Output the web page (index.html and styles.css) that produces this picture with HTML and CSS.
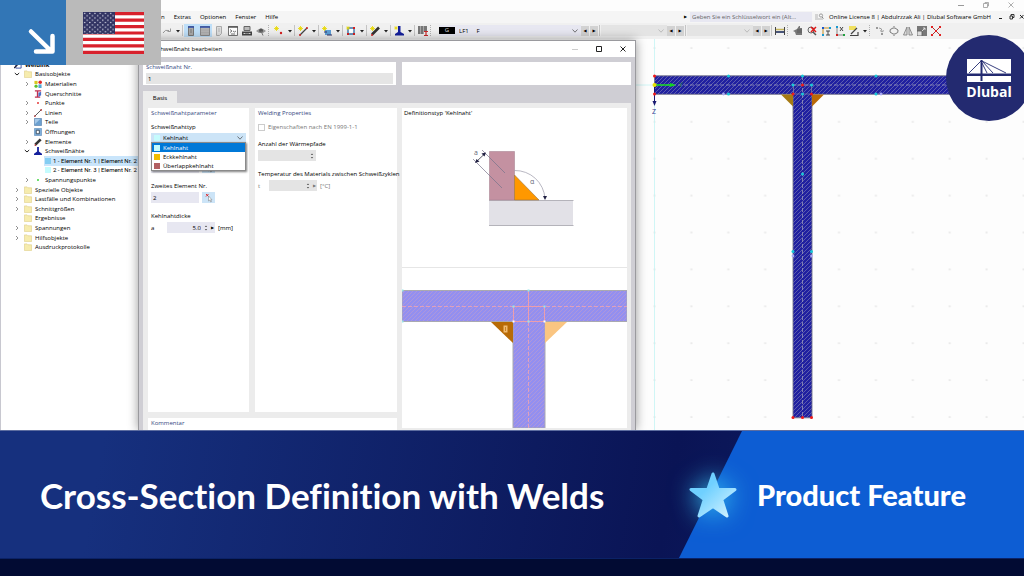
FILE: index.html
```
<!DOCTYPE html>
<html lang="de">
<head>
  <meta charset="UTF-8" />
  <meta name="viewport" content="width=device-width, initial-scale=1.0" />
  <title>Cross-Section Definition with Welds</title>
  <link rel="stylesheet" href="styles.css">
</head>
<body>
  <!-- shared symbols -->
  <svg class="defs" width="0" height="0" aria-hidden="true">
    <symbol id="folder" viewBox="0 0 9 9"><path d="M.5 2V1h3l1 1h4v6.500h-8z" fill="#f6ecae" stroke="#dccb7c" stroke-width=".6"/></symbol>
    <symbol id="chev" viewBox="0 0 6 6"><path d="M2 1l2 2-2 2" fill="none" stroke="#777" stroke-width=".8"/></symbol>
    <symbol id="chev-open" viewBox="0 0 6 6"><path d="M.8 2l2.200 2 2.200-2" fill="none" stroke="#222" stroke-width="1"/></symbol>
    <symbol id="caret" viewBox="0 0 6 6"><path d="M1 2h4l-2 2.400z" fill="#222"/></symbol>
    <symbol id="spark" viewBox="0 0 6 6"><path d="M3 0v6M0 3h6M1 1l4 4M5 1l-4 4" stroke="#e8d800" stroke-width="1"/></symbol>
    <symbol id="spin" viewBox="0 0 4 8"><path d="M.8 3L2 1.500 3.200 3zM.8 5L2 6.500 3.200 5z" fill="#555"/></symbol>
    <symbol id="pick" viewBox="0 0 10 10"><path d="M2 1l2.500 2.500M4.500 1L2 3.500" stroke="#e02020" stroke-width=".9"/><path d="M4.500 3v5l1.200-1 1 2 .8-.4-1-1.800h1.500z" fill="#fff" stroke="#777" stroke-width=".5"/></symbol>
  </svg>

  <main class="app">
    <div class="window-bar">
      <button aria-label="Minimieren"><svg viewBox="0 0 8 8"><path d="M1 4.500h6" stroke="#999"/></svg></button>
      <button aria-label="Verkleinern"><svg viewBox="0 0 8 8"><path d="M1.500 2.500h4v4h-4zM3 2.500v-1h3.500V5h-1" fill="none" stroke="#999" stroke-width=".8"/></svg></button>
      <button aria-label="Schließen"><svg viewBox="0 0 8 8"><path d="M1.500 1.500l5 5m0-5l-5 5" stroke="#999" stroke-width=".8"/></svg></button>
    </div>

    <div class="menu-bar">
      <nav class="menu">
        <a href="#">n</a><a href="#">Extras</a><a href="#">Optionen</a><a href="#">Fenster</a><a href="#">Hilfe</a>
      </nav>
      <div class="menu-right">
        <span class="play">▶</span>
        <input class="search" type="text" aria-label="Suche" placeholder="Geben Sie ein Schlüsselwort ein (Alt...">
        <svg class="find" viewBox="0 0 9 8"><path d="M0 2h3M0 4h3M0 6h8" stroke="#999" stroke-width=".7"/><circle cx="6" cy="2.500" r="1.600" fill="none" stroke="#888" stroke-width=".8"/><path d="M7 4l1.500 1.500" stroke="#888"/></svg>
        <span class="licence">Online License 8 | Abdulrzzak Ali | Dlubal Software GmbH</span>
        <svg class="mdi" viewBox="0 0 26 8"><path d="M1 5.500h3M22 2l3.500 3.500m0-3.500L22 5.500" stroke="#222"/><path d="M12 3h2.500v3H12zM13 3V1.500h3V4.500h-1.500" fill="none" stroke="#222" stroke-width=".9"/></svg>
      </div>
    </div>

    <div class="toolbar">
      <button class="tool" aria-label="Wiederholen"><svg viewBox="0 0 10 10"><path d="M1 7q2-4 6-2.500M8.500 2.500v3h-3" fill="none" stroke="#999"/></svg></button>
      <svg class="caret"><use href="#caret"/></svg>
      <i class="sep"></i>
      <button class="tool on" aria-label="Navigator"><svg viewBox="0 0 10 10"><path d="M2.500.5h5v9h-5z" fill="#aaa" stroke="#777"/><path d="M2 1h6" stroke="#2b4ba8" stroke-width="1.500"/><path d="M4 4h2M4 6h2" stroke="#555" stroke-width=".6"/></svg></button>
      <button class="tool on" aria-label="Tabellen"><svg viewBox="0 0 10 10"><path d="M.5.5h9v9h-9z" fill="#b4b4b4" stroke="#888"/><path d="M0 1h10" stroke="#2b4ba8" stroke-width="1.500"/><path d="M1 4h8M1 6.500h8" stroke="#a0a0a0" stroke-width=".5"/></svg></button>
      <button class="tool" aria-label="Bericht"><svg viewBox="0 0 10 10"><path d="M2.500.5h5v7l-2 2h-3z" fill="#ddd" stroke="#aaa"/><path d="M4 3h2M4 5h2" stroke="#999" stroke-width=".6"/></svg></button>
      <button class="tool" aria-label="Konsole"><svg viewBox="0 0 10 10"><path d="M.5.5h9v9h-9z" fill="#fff" stroke="#777"/><path d="M0 1h10" stroke="#555" stroke-width="1.500"/><path d="M2 3.500l2 1.500-2 1.500M5 5l1.500 1L8 5M3 8h4" fill="none" stroke="#444" stroke-width=".7"/></svg></button>
      <button class="tool" aria-label="Skript"><svg viewBox="0 0 10 10"><path d="M2 .5h6v4H2z" fill="#bbb" stroke="#666"/><path d="M0 5.500h10v4H0z" fill="#444"/><path d="M1.500 7.500h2m1 0h1m1 0h2" stroke="#fff" stroke-width=".8"/></svg></button>
      <button class="tool" aria-label="Ansicht"><svg viewBox="0 0 10 10"><path d="M0 5q5-5 10 0l-3 2H3z" fill="#999"/><circle cx="5" cy="4.500" r="2" fill="#555"/><path d="M5 5l2 4.500" stroke="#777"/></svg></button>
      <i class="sep dotted"></i>
      <button class="tool" aria-label="Neuer Punkt"><svg viewBox="0 0 10 10"><use href="#spark" width="5" height="5"/><circle cx="7" cy="7" r="1.200" fill="#d42020"/></svg></button>
      <svg class="caret"><use href="#caret"/></svg><i class="sep"></i>
      <button class="tool" aria-label="Neue Linie"><svg viewBox="0 0 10 10"><use href="#spark" width="5" height="5"/><path d="M2 9l7-7" stroke="#444" stroke-width="1.200"/><circle cx="2" cy="9" r="1" fill="#d42020"/><circle cx="9" cy="2" r="1" fill="#d42020"/></svg></button>
      <svg class="caret"><use href="#caret"/></svg><i class="sep"></i>
      <button class="tool" aria-label="Neues Teil"><svg viewBox="0 0 10 10"><path d="M3 4h6v5H3z" fill="#5c9ed6"/><use href="#spark" width="5" height="5"/><path d="M2 6h3M5 9h5" stroke="#336" /></svg></button>
      <svg class="caret"><use href="#caret"/></svg><i class="sep"></i>
      <button class="tool" aria-label="Neue Öffnung"><svg viewBox="0 0 10 10"><path d="M2 2h6v6H2z" fill="#fff" stroke="#3c74a8" stroke-width="1.400"/><g fill="#d42020"><path d="M7 1h2v2H7zM1 7h2v2H1zM7 7h2v2H7z"/></g><use href="#spark" width="4" height="4"/></svg></button>
      <svg class="caret"><use href="#caret"/></svg><i class="sep"></i>
      <button class="tool" aria-label="Neues Element"><svg viewBox="0 0 10 10"><path d="M2 8.500L9 1.500" stroke="#333" stroke-width="2.600"/><use href="#spark" width="5" height="5"/><circle cx="2" cy="9" r="1" fill="#d42020"/></svg></button>
      <svg class="caret"><use href="#caret"/></svg><i class="sep"></i>
      <button class="tool" aria-label="Neue Schweißnaht"><svg viewBox="0 0 10 10"><path d="M4 0h2.500v6L10 8v1.500H1V8l3-2z" fill="#15209c"/><use href="#spark" width="4" height="4"/></svg></button>
      <svg class="caret"><use href="#caret"/></svg><i class="sep"></i>
      <button class="tool" aria-label="Bibliothek"><svg viewBox="0 0 10 10"><path d="M0 0h2.600v8H0zM3 0h2.600v8H3zM6 0h3v5H6z" fill="#777"/><path d="M6 5.500h4M8 5.500v4M6 9.500h4" stroke="#c82828" stroke-width="1.200"/></svg></button>
      <i class="sep dotted"></i>

      <div class="load-case">
        <span class="load-tag">G</span>
        <select aria-label="Lastfall"><option>LF1 &nbsp; &nbsp; F</option></select>
        <svg class="down" viewBox="0 0 6 6"><path d="M.5 1.500L3 4.200l2.500-2.700" fill="none" stroke="#444" stroke-width=".7"/></svg>
      </div>
      <button class="step" aria-label="Zurück">◀</button><button class="step" aria-label="Weiter">▶</button>
      <i class="sep"></i>
      <div class="result"><select aria-label="Ergebnis" disabled></select><svg class="down" viewBox="0 0 6 6"><path d="M.5 1.500L3 4.200l2.500-2.700" fill="none" stroke="#aaa" stroke-width=".7"/></svg></div>
      <button class="step" aria-label="Zurück">◀</button><button class="step" aria-label="Weiter">▶</button>
      <i class="sep"></i>
      <div class="result"><select aria-label="Wert" disabled></select><svg class="down" viewBox="0 0 6 6"><path d="M.5 1.500L3 4.200l2.500-2.700" fill="none" stroke="#aaa" stroke-width=".7"/></svg></div>
      <button class="step" aria-label="Zurück">◀</button><button class="step" aria-label="Weiter">▶</button>
      <i class="sep"></i>
      <button class="tool" aria-label="Bemaßung"><svg viewBox="0 0 10 10"><path d="M.5 1v8M9.500 1v8" stroke="#444"/><path d="M1 3.500h8" stroke="#c8b860" stroke-width="1.500"/><path d="M1 6h8" stroke="#48557a" stroke-width="2"/></svg></button>
      <i class="sep dotted"></i>
      <button class="tool" aria-label="Hand"><svg viewBox="0 0 10 10"><path d="M0 5l4-2 2-3h1v2h2v7H3L2 6z" fill="#777"/><path d="M4 4h5M4 6h5" stroke="#444" stroke-width=".6"/></svg></button>
      <button class="tool" aria-label="Zoom zurücksetzen"><svg viewBox="0 0 10 10"><circle cx="4" cy="4" r="3" fill="#eee" stroke="#666"/><path d="M6 6l3 3" stroke="#555" stroke-width="1.500"/><path d="M4 1l5 5m0-5L4 6" stroke="#e01818" stroke-width="1.500"/></svg></button>
      <button class="tool" aria-label="Ansicht X"><svg viewBox="0 0 10 10"><path d="M2 2v7M2 2h7" stroke="#c89020"/><path d="M1 1h2v2H1z" fill="#1858d0"/><path d="M1 8h2v2H1zM8 1h2v2H8z" fill="#1898d0"/><path d="M5 5h4M5 9h4M7 5v4" stroke="#444"/></svg></button>
      <button class="tool" aria-label="Ansicht Z"><svg viewBox="0 0 10 10"><path d="M2 1v8h7" fill="none" stroke="#888"/><path d="M1 0h2v2H1z" fill="#1898d0"/><path d="M1 8h2v2H1z" fill="#d02020"/><path d="M8 8h2v2H8z" fill="#20a040"/><path d="M5 1l3 4M8 1L5 5" stroke="#444"/></svg></button>
      <button class="tool" aria-label="Arbeitsebene"><svg viewBox="0 0 10 10"><path d="M0 0h7v4H0z" fill="#f0e060"/><path d="M2 8l6-6M1 9.500h8V6" fill="none" stroke="#444" stroke-width="1.200"/></svg></button>
      <svg class="caret"><use href="#caret"/></svg>
      <i class="sep dotted"></i>
      <button class="tool" aria-label="Verschieben"><svg viewBox="0 0 10 10"><path d="M1 1h2v2H1zM6 7h2v2H6z" fill="#999"/><path d="M4 2q3 0 3 3M5 4.500l2 1.500 2-1.500" fill="none" stroke="#888" stroke-width=".8"/></svg></button>
      <button class="tool" aria-label="Drehen"><svg viewBox="0 0 10 10"><path d="M4 2Q0 3 1 6l3 2M6 8q4-1 3-4L6 2M5 0v3M5 7v3" fill="none" stroke="#777"/></svg></button>
      <button class="tool" aria-label="Spiegeln"><svg viewBox="0 0 10 10"><path d="M4 1v8H.5zM6 1v8h3.500z" fill="#ddd" stroke="#777" stroke-width=".8"/></svg></button>
      <button class="tool" aria-label="Skalieren"><svg viewBox="0 0 10 10"><path d="M0 0h10v10H0z" fill="#777"/><path d="M0 5h5v5H0z" fill="#ddd" stroke="#555" stroke-width=".8"/><path d="M5 5l3-3M6 2h2v2" fill="none" stroke="#eee" stroke-width=".8"/></svg></button>
      <button class="tool" aria-label="Löschen"><svg viewBox="0 0 10 10"><path d="M1 1l8 8M9 1L1 9" stroke="#b03030"/><path d="M0 0h2v2H0zM8 0h2v2H8zM0 8h2v2H0zM8 8h2v2H8zM4 4h2v2H4z" fill="#e02020"/></svg></button>
    </div>

    <div class="workspace">
      <aside class="sidebar">
        <ul class="tree">
          <li class="root"><svg class="ico" viewBox="0 0 9 9"><path d="M2 0h6v8H2z" fill="#fff" stroke="#334aa0"/><path d="M0 8l5-5" stroke="#223" stroke-width="1.500"/></svg><b>Weldlnk</b></li>
          <li><svg class="arr"><use href="#chev-open"/></svg><svg class="ico"><use href="#folder"/></svg>Basisobjekte</li>
          <li class="sub"><svg class="arr"><use href="#chev"/></svg><svg class="ico" viewBox="0 0 9 9"><path d="M.5 1h3.500v3.500H.5z" fill="#d8c820"/><circle cx="7" cy="2.500" r="2" fill="#e02828"/><circle cx="2.300" cy="7" r="1.800" fill="#58c030"/><path d="M5 5h3.500v4H5z" fill="#50a8d8"/></svg>Materialien</li>
          <li class="sub"><svg class="arr"></svg><svg class="ico" viewBox="0 0 9 9"><path d="M1 1h7M1 8h6M4 1v7" stroke="#c03050" stroke-width="1.600"/><path d="M5 3l3-1v4L5 8z" fill="#4a70c8"/></svg>Querschnitte</li>
          <li class="sub"><svg class="arr"><use href="#chev"/></svg><svg class="ico" viewBox="0 0 9 9"><circle cx="4.500" cy="4.500" r="1" fill="#e02020"/></svg>Punkte</li>
          <li class="sub"><svg class="arr"><use href="#chev"/></svg><svg class="ico" viewBox="0 0 9 9"><path d="M1 8l7-7" stroke="#444"/><circle cx="1" cy="8" r="1" fill="#b03030"/><circle cx="8" cy="1" r="1" fill="#b03030"/></svg>Linien</li>
          <li class="sub"><svg class="arr"><use href="#chev"/></svg><svg class="ico" viewBox="0 0 9 9"><path d="M.5.5h8v8h-8z" fill="#6ba0d0" stroke="#456f9c" stroke-width=".6"/><path d="M1 1h6L1 7z" fill="#a4c8e8"/></svg>Teile</li>
          <li class="sub"><svg class="arr"></svg><svg class="ico" viewBox="0 0 9 9"><path d="M.5.500h8v8h-8z" fill="#7fb0dc" stroke="#4d7fb0" stroke-width=".6"/><path d="M2.500 2.500h3.500v4H2.500z" fill="#fff" stroke="#345"/></svg>Öffnungen</li>
          <li class="sub"><svg class="arr"><use href="#chev"/></svg><svg class="ico" viewBox="0 0 9 9"><path d="M1.500 7.500l6-6" stroke="#333" stroke-width="3"/><circle cx="1.500" cy="8" r="1" fill="#b03030"/></svg>Elemente</li>
          <li class="sub"><svg class="arr"><use href="#chev-open"/></svg><svg class="ico" viewBox="0 0 9 9"><path d="M3.500 0h2v5L9 7.500V9H0V7.500L3.500 5z" fill="#15209c"/></svg>Schweißnähte</li>
          <li class="leaf active"><i class="sw blue"></i>1 - Element Nr. 1 | Element Nr. 2</li>
          <li class="leaf"><i class="sw cyan"></i>2 - Element Nr. 3 | Element Nr. 2</li>
          <li class="sub"><svg class="arr"><use href="#chev"/></svg><svg class="ico" viewBox="0 0 9 9"><circle cx="4.500" cy="4.500" r="1" fill="#28d028"/></svg>Spannungspunkte</li>
          <li><svg class="arr"><use href="#chev"/></svg><svg class="ico"><use href="#folder"/></svg>Spezielle Objekte</li>
          <li><svg class="arr"><use href="#chev"/></svg><svg class="ico"><use href="#folder"/></svg>Lastfälle und Kombinationen</li>
          <li><svg class="arr"><use href="#chev"/></svg><svg class="ico"><use href="#folder"/></svg>Schnittgrößen</li>
          <li><svg class="arr"></svg><svg class="ico"><use href="#folder"/></svg>Ergebnisse</li>
          <li><svg class="arr"><use href="#chev"/></svg><svg class="ico"><use href="#folder"/></svg>Spannungen</li>
          <li><svg class="arr"><use href="#chev"/></svg><svg class="ico"><use href="#folder"/></svg>Hilfsobjekte</li>
          <li><svg class="arr"></svg><svg class="ico"><use href="#folder"/></svg>Ausdruckprotokolle</li>
        </ul>
      </aside>

      <section class="dialog">
        <header class="dialog-title">
          <h2>Schweißnaht bearbeiten</h2>
          <div class="dialog-buttons">
            <button aria-label="Minimieren"><svg viewBox="0 0 8 8"><path d="M1 4.500h6" stroke="#ccc"/></svg></button>
            <button aria-label="Maximieren"><svg viewBox="0 0 8 8"><path d="M1.500 1.500h5v5h-5z" fill="none" stroke="#222"/></svg></button>
            <button aria-label="Schließen"><svg viewBox="0 0 8 8"><path d="M1.500 1.500l5 5m0-5l-5 5" stroke="#222"/></svg></button>
          </div>
        </header>
        <div class="dialog-head">
          <div class="card number">
            <label class="title" for="weld-no">Schweißnaht Nr.</label>
            <input id="weld-no" type="text" value="1">
          </div>
          <div class="card"></div>
        </div>
        <div class="tabs"><button class="tab">Basis</button></div>
        <div class="panel">
          <div class="forms">
            <div class="card form">
              <h3 class="title">Schweißnahtparameter</h3>
              <label for="weld-type">Schweißnahttyp</label>
              <div class="combo">
                <i class="sw cyan"></i>
                <select id="weld-type"><option>Kehlnaht</option><option>Eckkehlnaht</option><option>Überlappkehlnaht</option></select>
                <svg class="down" viewBox="0 0 6 6"><path d="M.5 1.500L3 4.200l2.500-2.700" fill="none" stroke="#444" stroke-width=".7"/></svg>
                <ul class="options">
                  <li class="selected"><i class="sw cyan"></i>Kehlnaht</li>
                  <li><i class="sw yellow"></i>Eckkehlnaht</li>
                  <li><i class="sw red"></i>Überlappkehlnaht</li>
                </ul>
              </div>
              <div class="row first">
                <input class="element" type="text" aria-label="Erstes Element" value="">
                <button class="pick" aria-label="Auswählen"><svg><use href="#pick"/></svg></button>
              </div>
              <label for="second">Zweites Element Nr.</label>
              <div class="row">
                <input id="second" class="element" type="text" value="2">
                <button class="pick" aria-label="Auswählen"><svg><use href="#pick"/></svg></button>
              </div>
              <label for="thick">Kehlnahtdicke</label>
              <div class="row">
                <span class="var">a</span>
                <span class="stepper"><input id="thick" type="text" value="5.0"><svg class="spin"><use href="#spin"/></svg><span class="play">▶</span></span>
                <span>[mm]</span>
              </div>
            </div>
            <div class="card form off">
              <h3 class="title">Welding Properties</h3>
              <div class="check"><input id="en" type="checkbox" disabled><label for="en">Eigenschaften nach EN 1999-1-1</label></div>
              <label for="paths">Anzahl der Wärmepfade</label>
              <div class="row"><span class="stepper wide"><input id="paths" type="text" disabled><svg class="spin"><use href="#spin"/></svg></span></div>
              <label for="temp">Temperatur des Materials zwischen Schweißzyklen</label>
              <div class="row"><span class="var">t</span><span class="stepper"><input id="temp" type="text" disabled><svg class="spin"><use href="#spin"/></svg><span class="play">▶</span></span><span class="unit">[°C]</span></div>
            </div>
            <div class="card comment"><h3 class="title">Kommentar</h3></div>
          </div>

          <div class="card preview">
            <h3>Definitionstyp 'Kehlnaht'</h3>
            <svg class="sketch" viewBox="402 118 225 149">
              <path d="M489 200h84v25h-84z" fill="#e2e1e7"/>
              <path d="M489 200.500h84.500M489 225.500h84.500" stroke="#b4b3ba"/>
              <path d="M489.500 151.500h25v48.500h-25z" fill="#c491a1" stroke="#a98593" stroke-width=".6"/>
              <path d="M514.500 175v25h24.500z" fill="#ff9800" stroke="#9a7340" stroke-width=".6"/>
              <path d="M482 150l23 23M473 159l29 29" stroke="#77728a" stroke-width=".7"/>
              <path d="M476.500 161.500l8-7.500" stroke="#334" stroke-width=".8"/>
              <path d="M475 163l1.500-4 3 2.500zM486 152.500l-4.500 1 3 3z" fill="#224"/>
              <path d="M514.500 170.500a30 30 0 0 1 30.500 28" fill="none" stroke="#9a98a8" stroke-width=".7"/>
              <path d="M543 196h4l-2 4z" fill="#224"/>
              <text x="474" y="155">a</text><text x="530" y="184">α</text>
            </svg>
            <svg class="detail" viewBox="402 268 225 160">
              <defs>
                <pattern id="hatch-light" width="4" height="4" patternUnits="userSpaceOnUse">
                  <path d="M0 0h4v4H0z" fill="#938ff0"/><path d="M-1 5l6-6M-1 1l2-2M3 5l2-2" stroke="#b99bd2" stroke-width=".7"/>
                </pattern>
              </defs>
              <path d="M402 290.500h225v31h-82V428h-32V321.500H402z" fill="url(#hatch-light)" stroke="#a9a9b0"/>
              <path d="M402 306.500h225M528.500 322v106" stroke="#dfa0bd" stroke-dasharray="4 2"/>
              <path d="M513.500 306.500h31v15h-31zM528.500 291v31" fill="none" stroke="#ec9dad"/>
              <path d="M491 322h22v21z" fill="#b86b06"/><path d="M545 322h22l-22 21z" fill="#fac581"/>
              <path d="M503.500 325.500h4v7h-4z" fill="#f0bb70"/>
              <path d="M505.500 327v4" stroke="#b86b06" stroke-width=".7"/>
              <path d="M527.500 289.500h2v2h-2zM512.500 305.500h2v2h-2zM543.500 305.500h2v2h-2zM527.500 320.500h2v2h-2zM402 289.500h1.500v2H402zM402 320.500h1.500v2H402z" fill="#96e6ea"/>
              <path d="M512.500 320.500h2v2h-2zM543.500 320.500h2v2h-2z" fill="#fff"/>
            </svg>
          </div>
        </div>
      </section>

      <div class="canvas">
        <svg class="model" viewBox="636 39 388 391" preserveAspectRatio="xMinYMin slice">
          <defs>
            <pattern id="dots" x="636" y="30" width="36.900" height="36.900" patternUnits="userSpaceOnUse"><path d="M17.500 17.500h2v1h-2z" fill="#d8d8d8"/></pattern>
            <pattern id="hatch" width="4" height="4" patternUnits="userSpaceOnUse"><path d="M0 0h4v4H0z" fill="#2020a0"/><path d="M-1 5l6-6M-1 1l2-2M3 5l2-2" stroke="#5c5cae" stroke-width="1"/></pattern>
          </defs>
          <path d="M636 39h388v391H636z" fill="url(#dots)"/>
          <path d="M654.500 39v391M636 85h18" stroke="#c4f4f4" stroke-width=".8"/>
          <path d="M654.500 75.800H1024v18.500H812v323.500h-19V94.300H654.500z" fill="url(#hatch)" stroke="#77778c" stroke-width=".9"/>
          <path d="M654 85h370M802.500 76v342" stroke="#9797b8" stroke-width=".8" stroke-dasharray="4 2"/>
          <path d="M781 94.500h12v12z" fill="#a67a14"/><path d="M812 94.500h12l-12 12z" fill="#b96a08"/>
          <path d="M793.500 94V85h18v9z" fill="none" stroke="#8888a0" stroke-width=".7"/>
          <path d="M655 85h16" stroke="#10d820" stroke-width="1.500"/><path d="M670 83l6 2-6 2z" fill="#10d820"/>
          <path d="M654.500 86v16" stroke="#181870"/><path d="M652.500 101h4l-2 5z" fill="#181870"/>
          <text class="axis y" x="679" y="87">Y</text><text class="axis" x="652" y="114">Z</text>
          <g fill="#18c8d8"><circle cx="728.500" cy="76" r="1.500"/><circle cx="728.500" cy="94" r="1.500"/><circle cx="802.500" cy="76" r="1.500"/><circle cx="802.500" cy="94" r="1.500"/><circle cx="793" cy="85" r="1.500"/><circle cx="811.500" cy="85" r="1.500"/><circle cx="876" cy="76" r="1.500"/><circle cx="876" cy="94" r="1.500"/><circle cx="802.500" cy="174" r="1.500"/><circle cx="793" cy="251.500" r="1.500"/><circle cx="811.500" cy="251.500" r="1.500"/></g>
          <g fill="#f01818"><circle cx="654.500" cy="76" r="1.500"/><circle cx="654.500" cy="94" r="1.500"/><circle cx="802.500" cy="85" r="1.500"/><circle cx="793" cy="94" r="1.500"/><circle cx="811.500" cy="94" r="1.500"/><circle cx="793" cy="417.500" r="1.500"/><circle cx="802.500" cy="417.500" r="1.500"/><circle cx="811.500" cy="417.500" r="1.500"/></g>
          <g fill="#a8a8f4"><circle cx="723.500" cy="94" r="1.400"/><circle cx="881" cy="94" r="1.400"/><circle cx="793" cy="256" r="1.400"/><circle cx="811.500" cy="256" r="1.400"/></g>
          <circle cx="654.500" cy="85" r="2" fill="#e8e000"/>
        </svg>
      </div>
    </div>

    <!-- corner badges -->
    <div class="language">
      <div class="arrow-box"><svg viewBox="0 0 66 65"><path d="M31 31.500L51 51M36 51.500h16.500V36" fill="none" stroke="#fff" stroke-width="4.500" stroke-linecap="round" stroke-linejoin="round"/></svg></div>
      <div class="flag-box">
        <svg viewBox="0 0 61 42" preserveAspectRatio="none">
          <defs><pattern id="stars" width="5.200" height="4.600" patternUnits="userSpaceOnUse"><circle cx="1.600" cy="1.400" r=".75" fill="#dfe2ee"/><circle cx="4.200" cy="3.700" r=".75" fill="#dfe2ee"/></pattern></defs>
          <path d="M0 0h61v42H0z" fill="#fff"/>
          <path d="M0 1.615h61M0 8.077h61M0 14.538h61M0 21h61M0 27.462h61M0 33.923h61M0 40.385h61" stroke="#d8212c" stroke-width="3.230"/>
          <path d="M0 0h32v22H0z" fill="#323463"/><path d="M0 0h32v22H0z" fill="url(#stars)"/>
        </svg>
      </div>
    </div>
    <div class="brand">
      <svg viewBox="0 0 44 23"><path d="M0 0h44v14.500H0zM0 17h44v6H0z" fill="#fff"/><path d="M14.500 1v21" stroke="#232a70" stroke-width="2"/><path d="M14 2L2 14M15 2l11 12M15 2l24 12M15 4l5 10" stroke="#232a70" stroke-width=".9"/></svg>
      <span>Dlubal</span>
    </div>
  </main>

  <section class="banner">
    <h1>Cross-Section Definition with Welds</h1>
    <div class="feature">
      <svg class="star" viewBox="0 0 48 46">
        <defs><linearGradient id="ice" x1="0" y1="0" x2="1" y2="1"><stop offset=".35" stop-color="#6fd0ff"/><stop offset="1" stop-color="#d8f4ff"/></linearGradient></defs>
        <path d="M24 2l5.200 15.500H46L32.700 27.500 38 44 24 34.500 10 44l5.300-16.500L2 17.500h16.800z" fill="url(#ice)" stroke="url(#ice)" stroke-width="3" stroke-linejoin="round"/>
      </svg>
      <span>Product Feature</span>
    </div>
  </section>
  <footer class="strip"></footer>
</body>
</html>
```
FILE: styles.css
```
* {
  box-sizing: border-box;
}
body {
  margin: 0;
  min-height: 100vh;
  display: flex;
  flex-direction: column;
  overflow-x: hidden;
  font-family: "Open Sans", "Noto Sans", sans-serif;
  font-size: 6px;
  line-height: 8px;
  color: #000;
  background: #020b33;
}
h1, h2, h3, ul {
  margin: 0;
  padding: 0;
  font-size: inherit;
  font-weight: inherit;
  list-style: none;
}
a {
  color: inherit;
  text-decoration: none;
}
button, input, select {
  font: inherit;
  color: inherit;
  margin: 0;
  padding: 0;
  border: 0;
  border-radius: 0;
  background: none;
  appearance: none;
  min-width: 0;
}
svg {
  display: block;
  flex: none;
}
.defs {
  position: absolute;
}
.app {
  flex: 1;
  position: relative;
  display: flex;
  flex-direction: column;
  overflow: hidden;
  background: #fdfdfd;
}

/* window chrome */
.window-bar {
  display: flex;
  justify-content: flex-end;
  gap: 17px;
  height: 11px;
  padding: 1px 9px 0 0;
}
.window-bar button, .dialog-buttons button {
  width: 8px;
  height: 8px;
}
.menu-bar {
  display: flex;
  justify-content: space-between;
  align-items: center;
  height: 12px;
  padding-left: 161px;
  background: #f5f5f5;
}
.menu {
  display: flex;
  gap: 9px;
}
.menu-right {
  display: flex;
  align-items: center;
  gap: 3px;
}
.play {
  font-family: "DejaVu Sans", sans-serif;
  font-size: 4px;
}
.search {
  width: 122px;
  height: 10px;
  padding-left: 2px;
  background: #e8e8f2;
}
.search::placeholder {
  color: #666;
}
.find {
  width: 9px;
  height: 8px;
}
.licence {
  margin: 0 4px 0 2px;
}
.mdi {
  width: 26px;
  height: 8px;
}
.toolbar {
  display: flex;
  align-items: center;
  height: 16px;
  padding: 0 0 1px 160px;
  background: #f0f0f0;
}
.tool {
  flex: none;
  width: 14px;
  height: 13px;
  padding: 1px 2px;
}
.tool svg {
  width: 10px;
  height: 10px;
}
.tool.on {
  background: #bfdff8;
}
.caret {
  width: 8px;
  height: 6px;
}
.sep {
  flex: none;
  width: 2px;
  height: 11px;
  border-left: 1px solid #c4c4c4;
}
.sep.dotted {
  width: 4px;
  border-left: 1px dotted #b0b0b0;
}
.load-case, .result {
  flex: none;
  display: flex;
  align-items: center;
  gap: 4px;
  width: 142px;
  height: 11px;
  margin-left: 5px;
  padding-right: 3px;
  background: #e7e7f1;
}
.load-tag {
  width: 16px;
  height: 7px;
  line-height: 7px;
  text-align: center;
  color: #ddd;
  background: #000;
}
.load-case select, .result select {
  flex: 1;
}
.result {
  width: 66px;
  margin-left: 0;
  background: #e4e4e4;
}
.step {
  flex: none;
  width: 8px;
  height: 10px;
  margin-right: 1px;
  font-family: "DejaVu Sans", sans-serif;
  font-size: 4px;
  line-height: 10px;
  text-align: center;
  background: #d2d2d2;
}
.workspace {
  flex: 1;
  display: grid;
  grid-template-columns: 138fr 498fr 388fr;
}

/* navigator tree */
.sidebar {
  min-width: 0;
  padding-top: 21px;
  border-left: 1px solid #c8c8d0;
  background: #fff;
  overflow: hidden;
}
.tree {
  display: grid;
  grid-auto-rows: 1fr;
  height: 192px;
}
.tree li {
  display: flex;
  align-items: center;
  padding-left: 13px;
  white-space: nowrap;
}
.tree .sub {
  padding-left: 23px;
}
.tree .leaf {
  gap: 2px;
  margin-left: 43px;
  padding-left: 1px;
  font-family: Roboto, "Open Sans", sans-serif;
}
.tree .active {
  background: #c9e5fb;
}
.arr {
  width: 6px;
  height: 6px;
  margin-right: 4px;
}
.ico {
  width: 8px;
  height: 8px;
  margin-right: 3px;
}
.sw {
  flex: none;
  width: 6px;
  height: 6px;
}
.blue { background: #84cdf2; }
.cyan { background: #c5fbfd; }
.yellow { background: #f2bd00; }
.red { background: #b25f62; }

/* weld dialog */
.dialog {
  z-index: 1;
  display: flex;
  flex-direction: column;
  min-width: 0;
  margin-top: 1px;
  border: solid #9a9a9e;
  border-width: 1px 1px 0;
  background: #cfced4;
  box-shadow: 0 0 10px rgba(0, 0, 0, 0.4);
}
.dialog-title {
  display: flex;
  justify-content: space-between;
  align-items: center;
  height: 16px;
  padding: 0 8px 1px 15px;
  background: #fff;
}
.dialog-buttons {
  display: flex;
  gap: 16px;
}
.card {
  background: #fff;
}
.title {
  color: #34487e;
}
.dialog-head {
  display: grid;
  grid-template-columns: 253fr 229fr;
  gap: 6px;
  padding: 5px 4px;
}
.number {
  padding: 0 3px 1px;
}
.number label {
  display: block;
  height: 11px;
  line-height: 10px;
}
.number input {
  display: block;
  width: 100%;
  height: 11px;
  padding-left: 2px;
  background: #e5e5e5;
}
.tabs {
  padding: 1px 4px 0;
}
.tab {
  display: block;
  width: 34px;
  height: 12px;
  padding-top: 2px;
  background: #ececec;
}
.panel {
  flex: 1;
  display: grid;
  grid-template-columns: 249fr 225fr;
  gap: 5px;
  margin: 0 4px;
  padding: 5px 4px 0 5px;
  background: #ececec;
}
.forms {
  display: grid;
  grid-template-columns: minmax(0, 101fr) minmax(0, 142fr);
  grid-template-rows: 1fr 12px;
  gap: 6px;
}
.form {
  display: flex;
  flex-direction: column;
  padding: 0 3px;
}
.form .title {
  margin: 1px 0 6px;
}
.form > label {
  white-space: nowrap;
  margin-bottom: 2px;
}
.combo {
  position: relative;
  display: flex;
  align-items: center;
  gap: 3px;
  height: 10px;
  padding: 0 3px;
  background: #cce4f7;
}
.combo select {
  flex: 1;
}
.down {
  width: 6px;
  height: 6px;
}
.options {
  position: absolute;
  top: 9px;
  left: 0;
  right: 0;
  border: 1px solid #8a8a8a;
  background: #fff;
  box-shadow: 1px 1px 2px rgba(0, 0, 0, 0.5);
}
.options li {
  display: flex;
  align-items: center;
  gap: 3px;
  height: 9px;
  padding-left: 2px;
}
.options .selected {
  color: #fff;
  background: #0078d7;
}
.row {
  display: flex;
  align-items: center;
  gap: 3px;
  height: 11px;
  margin-bottom: 9px;
}
.row.first {
  margin-top: 19px;
}
.element {
  width: 48px;
  height: 11px;
  padding-left: 2px;
  background: #e7e7f1;
}
.pick {
  width: 13px;
  height: 11px;
  padding: 0 2px;
  background: #cce4f7;
}
.pick svg {
  width: 10px;
  height: 10px;
}
.var {
  width: 13px;
}
.stepper {
  display: flex;
  align-items: center;
  gap: 3px;
  width: 48px;
  height: 11px;
  padding-right: 1px;
  background: #e7e7f1;
}
.stepper.wide {
  width: 58px;
  padding-right: 2px;
}
.stepper input {
  flex: 1;
  text-align: right;
}
.spin {
  width: 4px;
  height: 8px;
}
.off .stepper {
  background: #e4e4e4;
}
.off .var {
  width: 8px;
}
.off .var, .off .unit, .off .play, .check {
  color: #777;
}
.check {
  display: flex;
  align-items: center;
  gap: 3px;
  margin-bottom: 9px;
}
.check input {
  width: 7px;
  height: 7px;
  border: 1px solid #ccc;
  background: #fff;
}
.comment {
  grid-column: 1 / -1;
  padding: 1px 3px 0;
}
.preview {
  margin-bottom: 2px;
}
.preview h3 {
  height: 10px;
  padding: 1px 2px;
}
.preview svg {
  width: 100%;
}
.sketch {
  border-bottom: 1px solid #e6e6e6;
}
.sketch text {
  font-size: 7px;
  fill: #667;
}

/* model view */
.canvas {
  min-width: 0;
  overflow: hidden;
}
.model {
  width: 100%;
}
.axis {
  font-size: 7px;
  fill: #3a3a90;
}
.axis.y {
  fill: #0a7a30;
}

/* corner badges */
.language {
  position: absolute;
  z-index: 2;
  top: 0;
  left: 0;
  display: flex;
  height: 65px;
}
.arrow-box {
  width: 66px;
  background: #3276b6;
}
.flag-box {
  width: 95px;
  padding: 12px 17px;
  background: #bababa;
}
.flag-box svg {
  width: 61px;
  height: 42px;
}
.brand {
  position: absolute;
  z-index: 2;
  top: 35px;
  right: -8px;
  display: flex;
  flex-direction: column;
  align-items: center;
  width: 86px;
  height: 86px;
  padding-top: 24px;
  border-radius: 50%;
  font-size: 14px;
  line-height: 20px;
  font-weight: 700;
  color: #fff;
  background: #232a70;
}
.brand svg {
  width: 44px;
  height: 23px;
}

/* title banner */
.banner {
  position: relative;
  z-index: 3;
  display: flex;
  align-items: center;
  justify-content: space-between;
  height: 129px;
  padding-left: 40px;
  border-top: 1px solid #5d6da0;
  border-bottom: 1px solid #0b2266;
  font-family: Lato, "Open Sans", sans-serif;
  font-variant-ligatures: none;
  color: #fff;
  background: linear-gradient(100deg, #16307e 10%, #0a1455 65%, #12246c);
}
.banner h1 {
  font-size: 35px;
  line-height: 44px;
  font-weight: 700;
  white-space: nowrap;
}
.feature {
  position: relative;
  display: flex;
  align-items: center;
  gap: 20px;
  width: 345px;
  height: 100%;
  padding-left: 10px;
  font-size: 29px;
  line-height: 36px;
  font-weight: 900;
}
.feature::before {
  content: "";
  position: absolute;
  inset: 0;
  background: #0d5dd3;
  clip-path: polygon(63px 0, 100% 0, 100% 100%, 0 100%);
}
.feature span {
  position: relative;
  white-space: nowrap;
}
.star {
  position: relative;
  width: 48px;
  height: 46px;
  filter: drop-shadow(0 0 12px #35bdf0);
}
.strip {
  height: 17px;
  background: #020b33;
}
```
